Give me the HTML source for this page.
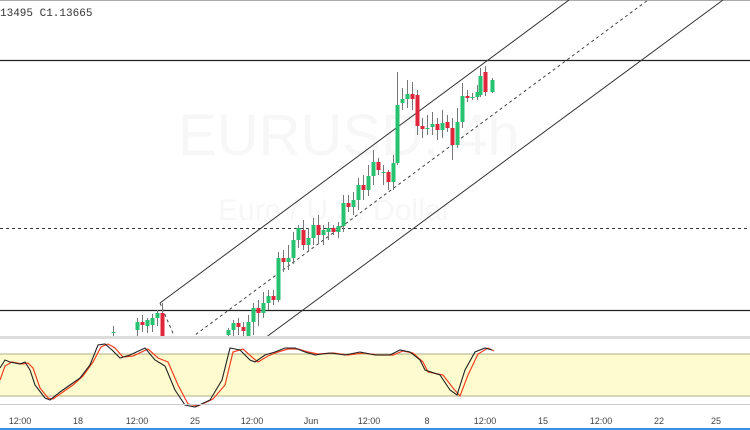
<!DOCTYPE html>
<html><head><meta charset="utf-8"><style>
html,body{margin:0;padding:0;background:#fff;width:750px;height:430px;overflow:hidden;font-family:"Liberation Sans",sans-serif}
svg{display:block}
</style></head><body>
<svg id="s" width="750" height="430" viewBox="0 0 750 430" xmlns="http://www.w3.org/2000/svg">
<rect width="750" height="430" fill="#fff"/>
<line x1="0" y1="0.5" x2="750" y2="0.5" stroke="#aaa"/>
<text x="0" y="16" font-size="11" fill="#333" font-family="Liberation Mono,monospace">13495  C1.13665</text>
<text x="178" y="155" font-size="58" fill="#f7f7f7">EURUSD, 4h</text>
<text x="218" y="220" font-size="30" fill="#f7f7f7">Euro / U.S. Dollar</text>
<line x1="0" y1="60.5" x2="750" y2="60.5" stroke="#222" stroke-width="1.3"/>
<line x1="0" y1="228.5" x2="750" y2="228.5" stroke="#333" stroke-dasharray="3,3"/>
<line x1="0" y1="310.5" x2="750" y2="310.5" stroke="#222" stroke-width="1.3"/>
<line x1="160" y1="303" x2="569" y2="0" stroke="#333"/>
<line x1="265" y1="338" x2="723" y2="0" stroke="#333"/>
<line x1="191" y1="338" x2="648" y2="0" stroke="#444" stroke-dasharray="3,3"/>
<line x1="160" y1="303" x2="175" y2="338" stroke="#444" stroke-dasharray="3,3"/>
<g id="c"></g>
<rect x="0" y="336" width="750" height="3" fill="#ddd"/>
<rect x="0" y="354" width="750" height="42" fill="#fefccf"/>
<line x1="0" y1="354" x2="750" y2="354" stroke="#b0ad80"/>
<line x1="0" y1="396" x2="750" y2="396" stroke="#b0ad80"/>
<polyline fill="none" stroke="#f04020" stroke-width="1.2" points="0,380 5,366 12,362 22,364 28,363 33,368 40,388 48,398 53,399 63,392 73,385 83,376 93,362 101,347 108,344 115,348 123,357 133,356 148,349 158,358 168,362 178,385 188,404 198,406 213,399 225,385 233,352 243,349 253,358 258,362 268,356 278,352 288,349 298,349 308,352 318,354 333,353 348,355 363,353 378,355 393,355 403,351 413,353 423,362 428,372 443,375 453,388 460,396 468,375 478,354 488,348 494,351"/>
<polyline fill="none" stroke="#222" stroke-width="1.1" points="0,368 5,360 10,362 20,364 25,362 30,370 35,385 45,398 50,400 60,392 70,385 80,378 90,365 98,345 105,344 112,350 120,358 130,355 145,348 155,360 165,366 175,390 185,405 195,407 210,400 222,380 230,348 240,350 250,360 255,362 265,355 275,352 285,348 295,348 305,352 315,355 330,353 345,355 360,352 375,355 390,355 400,350 410,352 420,360 425,370 440,375 450,390 457,395 465,370 475,352 485,348 492,350"/>
<line x1="0" y1="404.5" x2="750" y2="404.5" stroke="#ccc"/>
<g font-size="9" fill="#444" text-anchor="middle">
<text x="20" y="424">12:00</text><text x="78" y="424">18</text><text x="137" y="424">12:00</text><text x="195" y="424">25</text><text x="252" y="424">12:00</text><text x="311" y="424">Jun</text><text x="369" y="424">12:00</text><text x="427" y="424">8</text><text x="485" y="424">12:00</text><text x="543" y="424">15</text><text x="601" y="424">12:00</text><text x="659" y="424">22</text><text x="716" y="424">25</text>
</g>
<rect x="0" y="428" width="750" height="2" fill="#3a8ee6"/>
</svg>
<script>
var d=[[113,333,332,326,338],[137,330,322,318,338],[142,322,325,315,332],[147,326,320,318,333],[152,325,318,314,332],[157,318,313,310,326],[162,313,336,303,338],
[228,335,330,328,338],[233,330,323,320,336],[238,323,327,318,335],[243,327,331,322,338],[248,338,322,315,338],[253,322,308,303,335],[258,308,313,300,326],[263,313,303,292,318],[268,303,296,290,310],[273,296,300,290,305],[278,300,258,252,302],[283,258,262,250,272],[288,262,258,245,270],[293,258,240,232,264],[298,240,228,225,248],[303,230,245,220,250],[308,245,238,228,252],[313,238,225,218,245],[318,225,235,215,243],[323,235,230,225,245],[328,232,228,222,240],[333,228,232,225,235],[338,232,226,222,238],[343,226,203,195,232],[348,203,207,195,212],[353,207,200,192,215],[358,200,185,178,210],[363,185,190,175,200],[368,190,176,165,196],[373,176,162,150,185],[378,162,170,158,175],[383,172,172,165,185],[388,172,182,170,190],[393,182,163,155,190],[397,163,105,72,165],[402,103,99,88,110],[407,99,94,80,108],[412,94,99,82,110],[417,95,126,90,135],[422,126,129,118,138],[427,128,128,115,135],[432,127,124,112,135],[437,124,130,118,140],[442,130,123,110,138],[447,122,128,115,132],[452,128,145,118,160],[457,145,122,108,148],[462,122,96,83,128],[467,96,98,90,102],[472,97,97,93,100],[477,97,92,85,100],[480,95,76,68,97],[485,72,92,66,96],[492,92,80,78,93]];
var g=document.getElementById('c'),h='';
d.forEach(function(a){var x=a[0],o=a[1],c=a[2],up=c<=o,col=up?'#26c26f':'#e0263a';
h+='<line x1="'+(x+0.5)+'" y1="'+a[3]+'" x2="'+(x+0.5)+'" y2="'+Math.min(a[4],338)+'" stroke="#777"/>';
var t=Math.min(o,c),b=Math.min(Math.max(o,c),338);h+='<rect x="'+(x-1.5)+'" y="'+t+'" width="4" height="'+Math.max(1,b-t)+'" fill="'+col+'"/>';});
g.innerHTML=h;
</script>
</body></html>
